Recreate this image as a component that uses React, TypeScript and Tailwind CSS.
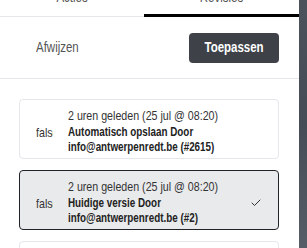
import { Check } from 'lucide-react'
import type { ReactNode } from 'react'

type Revision = {
  id: number
  when: string
  label: string
  author: string
  current?: boolean
}

const revisions: Revision[] = [
  { id: 2615, when: '2 uren geleden (25 jul @ 08:20)', label: 'Automatisch opslaan', author: 'info@antwerpenredt.be' },
  { id: 2, when: '2 uren geleden (25 jul @ 08:20)', label: 'Huidige versie', author: 'info@antwerpenredt.be', current: true },
  { id: 1, when: '3 uren geleden (25 jul @ 07:10)', label: 'Automatisch opslaan', author: 'info@antwerpenredt.be' },
]

// the app renders its text in a condensed face
function Narrow({ children, center }: { children: ReactNode; center?: boolean }) {
  return (
    <span
      className={
        center
          ? 'inline-block origin-center scale-x-[0.82] whitespace-nowrap'
          : 'inline-block origin-left scale-x-[0.82] whitespace-nowrap'
      }
    >
      {children}
    </span>
  )
}

function RevisionCard({ rev }: { rev: Revision }) {
  return (
    <div
      className={
        rev.current
          ? 'flex items-center rounded border border-[#1f2329] bg-[#e9eaec] pb-[3px] pl-4 pr-4 pt-2'
          : 'flex items-center rounded border border-[#e5e7eb] bg-white pb-[3px] pl-4 pr-4 pt-2'
      }
    >
      <div className="w-[17px] shrink-0 overflow-hidden whitespace-nowrap pt-[3px] text-[13px] leading-4 text-[#333]">
        <Narrow>false</Narrow>
      </div>
      <div className="ml-[15px] min-w-0 flex-1 text-[#222]">
        <div className="text-[13px] leading-4 text-[#333]">
          <Narrow>{rev.when}</Narrow>
        </div>
        <div className="mt-[1px] text-[12px] font-bold leading-[15px]">
          <div>
            <Narrow>{rev.label} Door</Narrow>
          </div>
          <div>
            <Narrow>
              {rev.author} (#{rev.id})
            </Narrow>
          </div>
        </div>
      </div>
      {rev.current && <Check size={12} strokeWidth={2} className="shrink-0 text-[#333]" />}
    </div>
  )
}

export default function App() {
  return (
    <div className="flex h-[248px] w-[307px] overflow-hidden font-['Liberation_Sans',Arial,sans-serif]">
      <div className="w-[299px] shrink-0 bg-white">
        <div className="grid grid-cols-[144px_1fr] text-[14px] text-[#555]">
          <div className="flex h-[17px] items-end justify-center border-b border-[#e5e7eb] pb-[9px]">
            <span className="leading-5">
              <Narrow center>Acties</Narrow>
            </span>
          </div>
          <div className="flex h-[17px] items-end justify-center border-b-[3px] border-black pb-[7px]">
            <span className="leading-5">
              <Narrow center>Revisies</Narrow>
            </span>
          </div>
        </div>
        <div className="flex h-[62px] items-center justify-between border-b border-[#e5e7eb] pl-5 pr-5">
          <button className="px-4 text-left text-[14px] text-[#555]">
            <Narrow>Afwijzen</Narrow>
          </button>
          <button className="h-[30px] w-[90px] rounded bg-[#3e4248] text-[14px] font-bold text-white">
            <Narrow center>Toepassen</Narrow>
          </button>
        </div>
        <div className="flex flex-col gap-[11px] pl-[19px] pr-5 pt-5">
          {revisions.map((rev) => (
            <RevisionCard key={rev.id + rev.label} rev={rev} />
          ))}
        </div>
      </div>
      <div className="flex-1 bg-gradient-to-b from-[#4b525b] via-[#464c55] to-[#565d67]" />
    </div>
  )
}
